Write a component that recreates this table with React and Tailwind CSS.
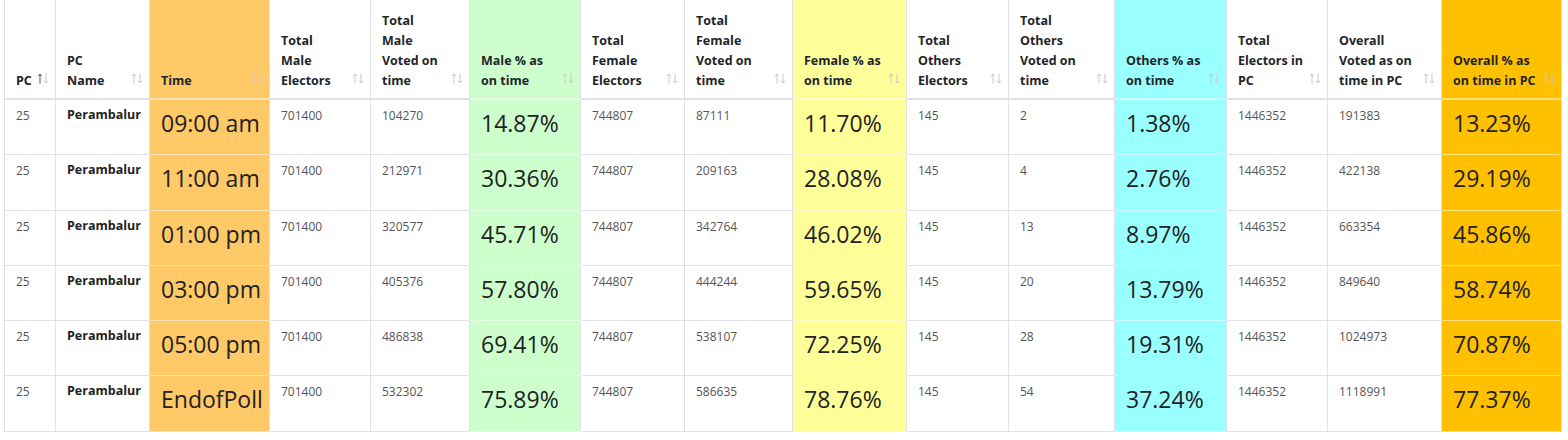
const SortIcon = ({ active }) => (
  <svg width="12" height="11" viewBox="0 0 12 11" fill="none" className="shrink-0 mb-[7px]">
    <path d="M3 10.5V1M1 3.2L3 1L5 3.2" stroke={active ? "#555" : "#c8c8c8"} strokeWidth="1" />
    <path d="M9 0.5V10M7 7.8L9 10L11 7.8" stroke="#c8c8c8" strokeWidth="1" />
  </svg>
);

const columns = [
  { w: "w-[52px]", head: ["PC"], bg: "", type: "small", active: true },
  { w: "w-[94px]", head: ["PC", "Name"], bg: "", type: "bold" },
  { w: "w-[120px]", head: ["Time"], bg: "bg-[#fec966]", type: "big" },
  { w: "w-[101px]", head: ["Total", "Male", "Electors"], bg: "", type: "small" },
  { w: "w-[99px]", head: ["Total", "Male", "Voted on", "time"], bg: "", type: "small" },
  { w: "w-[111px]", head: ["Male % as", "on time"], bg: "bg-[#ccffcc]", type: "big" },
  { w: "w-[104px]", head: ["Total", "Female", "Electors"], bg: "", type: "small" },
  { w: "w-[108px]", head: ["Total", "Female", "Voted on", "time"], bg: "", type: "small" },
  { w: "w-[114px]", head: ["Female % as", "on time"], bg: "bg-[#ffff99]", type: "big" },
  { w: "w-[102px]", head: ["Total", "Others", "Electors"], bg: "", type: "small" },
  { w: "w-[106px]", head: ["Total", "Others", "Voted on", "time"], bg: "", type: "small" },
  { w: "w-[112px]", head: ["Others % as", "on time"], bg: "bg-[#99ffff]", type: "big" },
  { w: "w-[101px]", head: ["Total", "Electors in", "PC"], bg: "", type: "small" },
  { w: "w-[114px]", head: ["Overall", "Voted as on", "time in PC"], bg: "", type: "small" },
  { w: "w-[120px]", head: ["Overall % as", "on time in PC"], bg: "bg-[#ffc000]", type: "big" },
];

const rows = [
  ["09:00 am", "104270", "14.87%", "87111", "11.70%", "2", "1.38%", "191383", "13.23%"],
  ["11:00 am", "212971", "30.36%", "209163", "28.08%", "4", "2.76%", "422138", "29.19%"],
  ["01:00 pm", "320577", "45.71%", "342764", "46.02%", "13", "8.97%", "663354", "45.86%"],
  ["03:00 pm", "405376", "57.80%", "444244", "59.65%", "20", "13.79%", "849640", "58.74%"],
  ["05:00 pm", "486838", "69.41%", "538107", "72.25%", "28", "19.31%", "1024973", "70.87%"],
  ["EndofPoll", "532302", "75.89%", "586635", "78.76%", "54", "37.24%", "1118991", "77.37%"],
];

const toCells = (r) => [
  "25", "Perambalur", r[0],
  "701400", r[1], r[2],
  "744807", r[3], r[4],
  "145", r[5], r[6],
  "1446352", r[7], r[8],
];

const textClass = {
  small: "text-[12px] leading-[18px] text-[#555] pt-[7px]",
  bold: "text-[12.5px] leading-[18px] font-bold text-[#222] pt-[6px]",
  big: "text-[23px] leading-[34px] text-[#222] pt-[6px]",
};

export default function App() {
  return (
    <div className="w-[1568px] h-[440px] bg-white overflow-hidden font-['Open_Sans',sans-serif]">
      <table className="table-fixed border-separate border-spacing-0 w-[1558px] ml-[4px]">
        <thead>
          <tr>
            {columns.map((c, i) => (
              <th
                key={i}
                className={`${c.w} ${c.bg} h-[100px] p-0 align-bottom text-left border-r border-r-[#dee2e6] border-b-2 ${
                  c.bg ? "border-b-white/50" : "border-b-[#dee2e6]"
                } ${i === 0 ? "border-l border-l-[#dee2e6]" : ""}`}
              >
                <div className="flex items-end justify-between gap-1 pl-[11px] pr-[6px] pb-[7px]">
                  <div className="text-[12.5px] leading-[20px] font-bold text-[#212529] whitespace-nowrap">
                    {c.head.map((h, j) => (
                      <div key={j}>{h}</div>
                    ))}
                  </div>
                  <SortIcon active={c.active} />
                </div>
              </th>
            ))}
          </tr>
        </thead>
        <tbody>
          {rows.map((r, ri) => (
            <tr key={ri}>
              {toCells(r).map((v, ci) => {
                const c = columns[ci];
                return (
                  <td
                    key={ci}
                    className={`${c.bg} h-[55.3px] align-top pl-[11px] pr-[6px] pb-0 whitespace-nowrap border-r border-r-[#dee2e6] border-b ${
                      c.bg ? "border-b-white/50" : "border-b-[#dee2e6]"
                    } ${ci === 0 ? "border-l border-l-[#dee2e6]" : ""} ${textClass[c.type]}`}
                  >
                    {v}
                  </td>
                );
              })}
            </tr>
          ))}
        </tbody>
      </table>
    </div>
  );
}
